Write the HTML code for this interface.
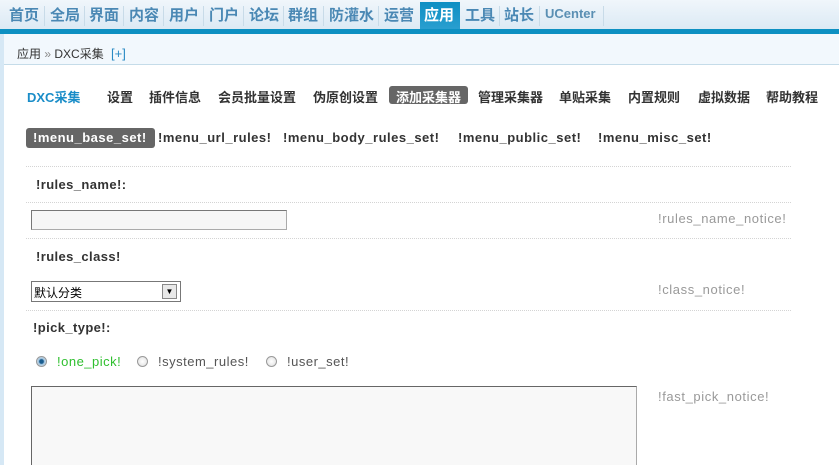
<!DOCTYPE html>
<html><head><meta charset="utf-8"><style>
*{margin:0;padding:0;box-sizing:border-box}
html,body{width:839px;height:465px;overflow:hidden}
body{background:#fff;font-family:"Liberation Sans","Noto Sans CJK SC",sans-serif;position:relative}
.a{position:absolute;white-space:nowrap}
#nav{left:0;top:0;width:839px;height:30px;background:linear-gradient(#f0f6fb,#dbe9f4)}
.n{position:absolute;top:4px;font-size:15px;color:#4a88b4;font-weight:bold}
.sep{position:absolute;top:6px;width:1px;height:20px;background:#c8dbe8}
#bar{left:0;top:29px;width:839px;height:5px;background:#0d90c2}
#bc{left:4px;top:34px;width:835px;height:31px;background:#f2f8fd;border-bottom:1px solid #c5dce9}
#lb{left:0;top:34px;width:4px;height:431px;background:#d6e8f5}
.m{position:absolute;top:87px;font-size:13px;font-weight:bold;color:#333}
.t{position:absolute;top:130px;font-size:13px;font-weight:bold;color:#333;letter-spacing:0.5px}
.dot{position:absolute;left:26px;width:765px;border-top:1px dotted #d4d4d4;height:0}
.lbl{position:absolute;left:36px;font-size:13px;font-weight:bold;color:#333;letter-spacing:0.4px}
.nt{position:absolute;left:658px;font-size:13px;color:#999;letter-spacing:0.6px}
.r{position:absolute;top:356px;width:11px;height:11px;border-radius:50%;border:1px solid #999;background:radial-gradient(#fff,#ddd)}
.o{position:absolute;top:354px;font-size:13px;color:#555;letter-spacing:0.5px}
</style></head><body>
<div id="nav" class="a"></div>
<span class="n" style="left:9px">首页</span><div class="sep" style="left:44px"></div>
<span class="n" style="left:50px">全局</span><div class="sep" style="left:84px"></div>
<span class="n" style="left:89px">界面</span><div class="sep" style="left:123px"></div>
<span class="n" style="left:129px">内容</span><div class="sep" style="left:163px"></div>
<span class="n" style="left:169px">用户</span><div class="sep" style="left:203px"></div>
<span class="n" style="left:209px">门户</span><div class="sep" style="left:243px"></div>
<span class="n" style="left:249px">论坛</span><div class="sep" style="left:283px"></div>
<span class="n" style="left:288px">群组</span><div class="sep" style="left:323px"></div>
<span class="n" style="left:329px">防灌水</span><div class="sep" style="left:378px"></div>
<span class="n" style="left:384px">运营</span>
<div class="a" style="left:420px;top:2px;width:40px;height:28px;background:linear-gradient(#0d8fc3,#2a9fd0)"></div>
<span class="n" style="left:424px;color:#fff">应用</span>
<span class="n" style="left:465px">工具</span><div class="sep" style="left:499px"></div>
<span class="n" style="left:504px">站长</span><div class="sep" style="left:539px"></div>
<span class="n" style="left:545px;font-size:13px;top:6px;color:#5a8fb3">UCenter</span><div class="sep" style="left:603px"></div>
<div id="bar" class="a"></div>
<div id="bc" class="a"></div>
<div id="lb" class="a"></div>
<span class="a" style="left:17px;top:45px;font-size:12px;color:#333">应用 <span style="color:#888">»</span> DXC采集 <span style="color:#2a8ac4;margin-left:4px;font-size:13px">[+]</span></span>
<span class="m" style="left:27px;color:#1a8dc8">DXC采集</span>
<span class="m" style="left:107px">设置</span>
<span class="m" style="left:149px">插件信息</span>
<span class="m" style="left:218px">会员批量设置</span>
<span class="m" style="left:313px">伪原创设置</span>
<div class="a" style="left:389px;top:86px;width:79px;height:18px;background:#666;border-radius:3px"></div>
<span class="m" style="left:396px;color:#fff">添加采集器</span>
<span class="m" style="left:478px">管理采集器</span>
<span class="m" style="left:559px">单贴采集</span>
<span class="m" style="left:628px">内置规则</span>
<span class="m" style="left:698px">虚拟数据</span>
<span class="m" style="left:766px">帮助教程</span>
<div class="a" style="left:26px;top:128px;width:129px;height:20px;background:#666;border-radius:3px"></div>
<span class="t" style="left:33px;color:#fff">!menu_base_set!</span>
<span class="t" style="left:158px">!menu_url_rules!</span>
<span class="t" style="left:283px">!menu_body_rules_set!</span>
<span class="t" style="left:458px">!menu_public_set!</span>
<span class="t" style="left:598px">!menu_misc_set!</span>
<div class="dot" style="top:166px"></div>
<span class="lbl" style="top:177px">!rules_name!:</span>
<div class="dot" style="top:202px"></div>
<div class="a" style="left:31px;top:210px;width:256px;height:20px;border:1px solid #aaa;border-top-color:#777;border-left-color:#777;background:#f6f6f6"></div>
<span class="nt" style="top:211px">!rules_name_notice!</span>
<div class="dot" style="top:238px"></div>
<span class="lbl" style="top:249px">!rules_class!</span>
<div class="a" style="left:31px;top:281px;width:150px;height:21px;border:1px solid #777;background:#fff"></div>
<span class="a" style="left:34px;top:284px;font-size:12px;color:#000">默认分类</span>
<div class="a" style="left:162px;top:284px;width:15px;height:15px;border:1px solid #888;background:#e8e8e8;font-size:8px;text-align:center;line-height:14px">▼</div>
<span class="nt" style="top:282px">!class_notice!</span>
<div class="dot" style="top:310px"></div>
<span class="lbl" style="top:320px;left:33px">!pick_type!:</span>
<div class="r" style="left:36px;background:radial-gradient(#1a5d8f 30%,#9fc3de 45%,#eee)"></div>
<span class="o" style="left:57px;color:#2fbf2f">!one_pick!</span>
<div class="r" style="left:137px"></div>
<span class="o" style="left:158px">!system_rules!</span>
<div class="r" style="left:266px"></div>
<span class="o" style="left:287px">!user_set!</span>
<div class="a" style="left:31px;top:386px;width:606px;height:90px;border:1px solid #aaa;border-top-color:#666;border-left-color:#666;background:#f8f8f8"></div>
<span class="nt" style="top:389px">!fast_pick_notice!</span>
</body></html>
